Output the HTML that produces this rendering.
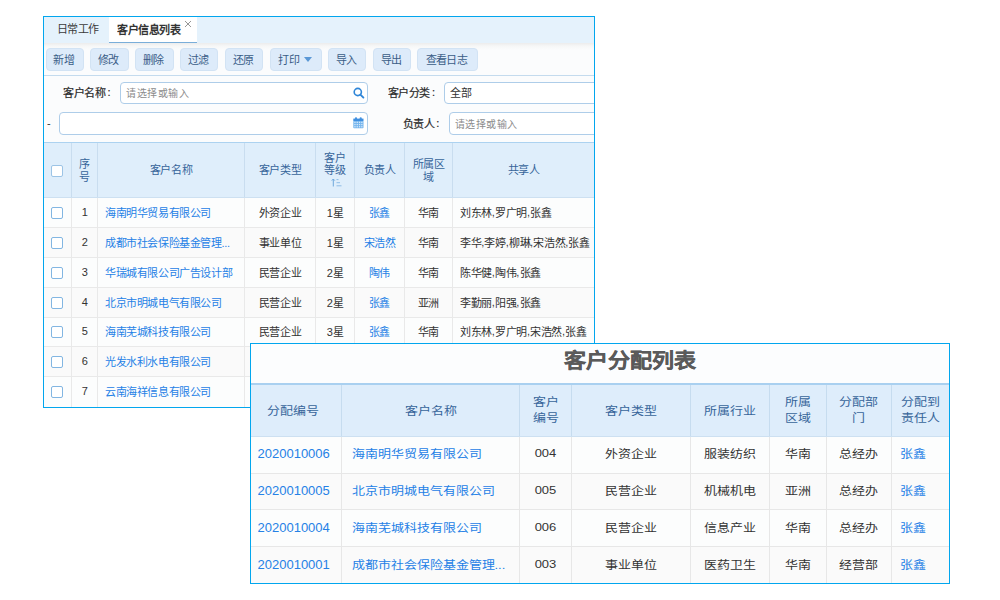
<!DOCTYPE html>
<html lang="zh-CN"><head><meta charset="utf-8">
<style>
*{box-sizing:border-box;margin:0;padding:0}
html,body{width:1000px;height:600px;overflow:hidden;background:#fff;font-family:"Liberation Sans",sans-serif;color:#333}
.a{position:absolute}
.c{display:flex;align-items:center;white-space:nowrap;overflow:hidden}
.cb{position:absolute;width:12px;height:12px;border:1px solid #82b6e2;border-radius:2px;background:#fff}
.btn{position:absolute;height:22.6px;padding-right:2px;border:1px solid #d2e3f4;background:#ddebfa;border-radius:4px;font-size:11px;letter-spacing:-0.6px;display:flex;align-items:center;justify-content:center;color:#3a5d87;white-space:nowrap}
.inp{position:absolute;border:1px solid #aecde9;border-radius:4px;background:#fff}
</style></head><body>

<div class="a" style="left:43px;top:16px;width:552px;height:392px;border:1px solid #02a6ee;background:#fbfcfd;overflow:hidden">
<div class="a" style="left:0px;top:0px;width:550px;height:26px;background:#e5f2fc"></div>
<div class="a c" style="left:12.5px;top:-0.2px;width:50px;height:23px;justify-content:flex-start;font-size:11px;letter-spacing:-0.4px;color:#3a3a3a">日常工作</div>
<div class="a" style="left:65px;top:0px;width:88px;height:26px;background:#fff"></div>
<div class="a" style="left:65px;top:24.6px;width:88px;height:2px;background:#7aaed9"></div>
<div class="a c" style="left:73px;top:0px;width:70px;height:23px;justify-content:flex-start;font-size:11px;letter-spacing:-0.5px;font-weight:bold;color:#333">客户信息列表</div>
<svg class="a" style="left:139.8px;top:2.6px" width="8" height="8" viewBox="0 0 8 8"><path d="M1 1L7 7M7 1L1 7" stroke="#8a8a8a" stroke-width="0.9"/></svg>
<div class="a" style="left:0px;top:26px;width:550px;height:32px;background:linear-gradient(#ececec 0,#f6f7f7 3px,#fbfcfd 7px,#fbfcfd 100%)"></div>
<div class="a" style="left:0px;top:58px;width:550px;height:1.3px;background:#c4dbee"></div>
<div class="btn" style="left:1.5px;top:31.2px;width:38.5px">新增</div>
<div class="btn" style="left:46px;top:31.2px;width:39px">修改</div>
<div class="btn" style="left:91px;top:31.2px;width:39px">删除</div>
<div class="btn" style="left:136px;top:31.2px;width:38px">过滤</div>
<div class="btn" style="left:181px;top:31.2px;width:38px">还原</div>
<div class="btn" style="left:226px;top:31.2px;width:52px">打印<span style="display:inline-block;width:0;height:0;border-left:4px solid transparent;border-right:4px solid transparent;border-top:5px solid #5b98d6;margin-left:4.6px;margin-top:1px"></span></div>
<div class="btn" style="left:284px;top:31.2px;width:38px">导入</div>
<div class="btn" style="left:329px;top:31.2px;width:38px">导出</div>
<div class="btn" style="left:373px;top:31.2px;width:61px">查看日志</div>
<div class="a c" style="left:19px;top:68px;width:60px;height:14px;justify-content:flex-start;font-size:11px;letter-spacing:-0.4px;color:#2a2a2a;-webkit-text-stroke:0.2px #2a2a2a">客户名称<span style='margin-left:2px'>:</span></div>
<div class="inp" style="left:76px;top:65px;width:248px;height:22px"></div>
<div class="a c" style="left:82px;top:68px;width:100px;height:14px;justify-content:flex-start;font-size:10px;letter-spacing:0.55px;color:#8c8c8c">请选择或输入</div>
<svg class="a" style="left:308.5px;top:69.5px" width="12" height="12" viewBox="0 0 12 12"><circle cx="4.8" cy="5" r="3.6" fill="none" stroke="#2f86d8" stroke-width="1.6"/><path d="M7.4 7.6L10.4 10.6" stroke="#2f86d8" stroke-width="1.9" stroke-linecap="round"/></svg>
<div class="a c" style="left:343.5px;top:68px;width:60px;height:14px;justify-content:flex-start;font-size:11px;letter-spacing:-0.4px;color:#2a2a2a;-webkit-text-stroke:0.2px #2a2a2a">客户分类<span style='margin-left:2px'>:</span></div>
<div class="inp" style="left:400px;top:65px;width:200px;height:22px"></div>
<div class="a c" style="left:406px;top:68px;width:50px;height:14px;justify-content:flex-start;font-size:11px;letter-spacing:-0.4px;color:#333">全部</div>
<div class="a c" style="left:3px;top:99px;width:10px;height:14px;justify-content:flex-start;font-size:11px;letter-spacing:-0.4px;color:#333">-</div>
<div class="inp" style="left:15px;top:95px;width:309px;height:23px"></div>
<svg class="a" style="left:309px;top:100.4px" width="11" height="12" viewBox="0 0 11 12"><rect x="1.9" y="0.2" width="2.2" height="2.6" rx="1" fill="#4a96e2"/><rect x="6.6" y="0.2" width="2.2" height="2.6" rx="1" fill="#4a96e2"/><rect x="0.3" y="1.6" width="10.2" height="2.6" fill="#3f8fe0"/><rect x="0.3" y="4" width="10.2" height="7.3" rx="0.8" fill="#74b5ee"/><g fill="#e8f3fd" opacity="0.85"><rect x="1.3" y="4.7" width="1.3" height="1.3"/><rect x="3.6" y="4.7" width="1.3" height="1.3"/><rect x="5.9" y="4.7" width="1.3" height="1.3"/><rect x="8.2" y="4.7" width="1.3" height="1.3"/><rect x="1.3" y="6.9" width="1.3" height="1.3"/><rect x="3.6" y="6.9" width="1.3" height="1.3"/><rect x="5.9" y="6.9" width="1.3" height="1.3"/><rect x="8.2" y="6.9" width="1.3" height="1.3"/><rect x="1.3" y="9.1" width="1.3" height="1.3"/><rect x="3.6" y="9.1" width="1.3" height="1.3"/><rect x="5.9" y="9.1" width="1.3" height="1.3"/><rect x="8.2" y="9.1" width="1.3" height="1.3"/></g></svg>
<div class="a c" style="left:358.5px;top:99px;width:60px;height:14px;justify-content:flex-start;font-size:11px;letter-spacing:-0.4px;color:#2a2a2a;-webkit-text-stroke:0.2px #2a2a2a">负责人<span style='margin-left:2px'>:</span></div>
<div class="inp" style="left:404.5px;top:95px;width:200px;height:23px"></div>
<div class="a c" style="left:410.5px;top:99px;width:100px;height:14px;justify-content:flex-start;font-size:10px;letter-spacing:0.55px;color:#8c8c8c">请选择或输入</div>
<div class="a" style="left:0px;top:125px;width:550px;height:55px;background:#dfeefb"></div>
<div class="a" style="left:0px;top:125px;width:550px;height:1px;background:#acd2f0"></div>
<div class="a" style="left:0px;top:180px;width:550px;height:1px;background:#cde0f1"></div>
<div class="a" style="left:0px;top:181px;width:550px;height:30px;background:#fcfdfd"></div>
<div class="a" style="left:0px;top:211px;width:550px;height:30px;background:#fafafa"></div>
<div class="a" style="left:0px;top:241px;width:550px;height:30px;background:#fcfdfd"></div>
<div class="a" style="left:0px;top:271px;width:550px;height:30px;background:#fafafa"></div>
<div class="a" style="left:0px;top:301px;width:550px;height:29.30000000000001px;background:#fcfdfd"></div>
<div class="a" style="left:0px;top:330.3px;width:550px;height:30.0px;background:#fafafa"></div>
<div class="a" style="left:0px;top:360.3px;width:550px;height:30.69999999999999px;background:#fcfdfd"></div>
<div class="a" style="left:27px;top:126px;width:1px;height:54px;background:#c9ddef"></div>
<div class="a" style="left:27px;top:181px;width:1px;height:210px;background:#e9e9e9"></div>
<div class="a" style="left:53px;top:126px;width:1px;height:54px;background:#c9ddef"></div>
<div class="a" style="left:53px;top:181px;width:1px;height:210px;background:#e9e9e9"></div>
<div class="a" style="left:200px;top:126px;width:1px;height:54px;background:#c9ddef"></div>
<div class="a" style="left:200px;top:181px;width:1px;height:210px;background:#e9e9e9"></div>
<div class="a" style="left:271px;top:126px;width:1px;height:54px;background:#c9ddef"></div>
<div class="a" style="left:271px;top:181px;width:1px;height:210px;background:#e9e9e9"></div>
<div class="a" style="left:310px;top:126px;width:1px;height:54px;background:#c9ddef"></div>
<div class="a" style="left:310px;top:181px;width:1px;height:210px;background:#e9e9e9"></div>
<div class="a" style="left:360px;top:126px;width:1px;height:54px;background:#c9ddef"></div>
<div class="a" style="left:360px;top:181px;width:1px;height:210px;background:#e9e9e9"></div>
<div class="a" style="left:408px;top:126px;width:1px;height:54px;background:#c9ddef"></div>
<div class="a" style="left:408px;top:181px;width:1px;height:210px;background:#e9e9e9"></div>
<div class="a" style="left:0px;top:210px;width:550px;height:1px;background:#e9e9e9"></div>
<div class="a" style="left:0px;top:240px;width:550px;height:1px;background:#e9e9e9"></div>
<div class="a" style="left:0px;top:270px;width:550px;height:1px;background:#e9e9e9"></div>
<div class="a" style="left:0px;top:300px;width:550px;height:1px;background:#e9e9e9"></div>
<div class="a" style="left:0px;top:329.3px;width:550px;height:1px;background:#e9e9e9"></div>
<div class="a" style="left:0px;top:359.3px;width:550px;height:1px;background:#e9e9e9"></div>
<div class="cb" style="left:6.7px;top:147.5px;border-color:#9cc4e6"></div>
<div class="a c" style="left:28px;top:127px;width:25px;height:54px;justify-content:center;font-size:11px;letter-spacing:-0.4px;color:#37659a"><div style="text-align:center;line-height:13.3px">序<br>号</div></div>
<div class="a c" style="left:54px;top:127px;width:146px;height:54px;justify-content:center;font-size:11px;letter-spacing:-0.4px;color:#37659a"><div style="text-align:center;line-height:13.3px">客户名称</div></div>
<div class="a c" style="left:201px;top:127px;width:70px;height:54px;justify-content:center;font-size:11px;letter-spacing:-0.4px;color:#37659a"><div style="text-align:center;line-height:13.3px">客户类型</div></div>
<div class="a c" style="left:272px;top:127px;width:38px;height:54px;justify-content:center;font-size:11px;letter-spacing:-0.4px;color:#37659a"><div style="text-align:center;line-height:13.3px"><div style='line-height:12.2px;margin-top:-14.6px'>客户<br>等级</div></div></div>
<div class="a c" style="left:311px;top:127px;width:49px;height:54px;justify-content:center;font-size:11px;letter-spacing:-0.4px;color:#37659a"><div style="text-align:center;line-height:13.3px">负责人</div></div>
<div class="a c" style="left:361px;top:127px;width:47px;height:54px;justify-content:center;font-size:11px;letter-spacing:-0.4px;color:#37659a"><div style="text-align:center;line-height:13.3px">所属区<br>域</div></div>
<div class="a c" style="left:409px;top:127px;width:141px;height:54px;justify-content:center;font-size:11px;letter-spacing:-0.4px;color:#37659a"><div style="text-align:center;line-height:13.3px">共享人</div></div>
<svg class="a" style="left:287px;top:161px" width="12" height="9" viewBox="0 0 12 9"><path d="M2.3 8.5V1.2M0.8 2.6L2.3 1L3.8 2.6" stroke="#6ea8dc" stroke-width="1" fill="none"/><path d="M5.5 1.6H7.5M5.5 4.7H9M5.5 7.8H10.5" stroke="#8fbde6" stroke-width="1"/></svg>
<div class="cb" style="left:6.7px;top:189.5px"></div>
<div class="a c" style="left:28px;top:180px;width:25px;height:29px;justify-content:center;font-size:11px;letter-spacing:-0.4px;color:#333">1</div>
<div class="a c" style="left:61px;top:180px;width:139px;height:29px;justify-content:flex-start;font-size:11px;letter-spacing:-0.4px;color:#2581e6">海南明华贸易有限公司</div>
<div class="a c" style="left:201px;top:180px;width:70px;height:29px;justify-content:center;font-size:11px;letter-spacing:-0.4px;color:#333">外资企业</div>
<div class="a c" style="left:272px;top:180px;width:38px;height:29px;justify-content:center;font-size:11px;letter-spacing:-0.4px;color:#333">1星</div>
<div class="a c" style="left:311px;top:180px;width:49px;height:29px;justify-content:center;font-size:11px;letter-spacing:-0.4px;color:#2581e6">张鑫</div>
<div class="a c" style="left:361px;top:180px;width:47px;height:29px;justify-content:center;font-size:11px;letter-spacing:-0.4px;color:#333">华南</div>
<div class="a c" style="left:416px;top:180px;width:134px;height:29px;justify-content:flex-start;font-size:11px;letter-spacing:-0.4px;color:#333">刘东林<span style="margin-right:0.6px">,</span>罗广明<span style="margin-right:0.6px">,</span>张鑫</div>
<div class="cb" style="left:6.7px;top:219.5px"></div>
<div class="a c" style="left:28px;top:210px;width:25px;height:29px;justify-content:center;font-size:11px;letter-spacing:-0.4px;color:#333">2</div>
<div class="a c" style="left:61px;top:210px;width:139px;height:29px;justify-content:flex-start;font-size:11px;letter-spacing:-0.4px;color:#2581e6">成都市社会保险基金管理...</div>
<div class="a c" style="left:201px;top:210px;width:70px;height:29px;justify-content:center;font-size:11px;letter-spacing:-0.4px;color:#333">事业单位</div>
<div class="a c" style="left:272px;top:210px;width:38px;height:29px;justify-content:center;font-size:11px;letter-spacing:-0.4px;color:#333">1星</div>
<div class="a c" style="left:311px;top:210px;width:49px;height:29px;justify-content:center;font-size:11px;letter-spacing:-0.4px;color:#2581e6">宋浩然</div>
<div class="a c" style="left:361px;top:210px;width:47px;height:29px;justify-content:center;font-size:11px;letter-spacing:-0.4px;color:#333">华南</div>
<div class="a c" style="left:416px;top:210px;width:134px;height:29px;justify-content:flex-start;font-size:11px;letter-spacing:-0.4px;color:#333">李华<span style="margin-right:0.6px">,</span>李婷<span style="margin-right:0.6px">,</span>柳琳<span style="margin-right:0.6px">,</span>宋浩然<span style="margin-right:0.6px">,</span>张鑫</div>
<div class="cb" style="left:6.7px;top:249.5px"></div>
<div class="a c" style="left:28px;top:240px;width:25px;height:29px;justify-content:center;font-size:11px;letter-spacing:-0.4px;color:#333">3</div>
<div class="a c" style="left:61px;top:240px;width:139px;height:29px;justify-content:flex-start;font-size:11px;letter-spacing:-0.4px;color:#2581e6">华瑞城有限公司广告设计部</div>
<div class="a c" style="left:201px;top:240px;width:70px;height:29px;justify-content:center;font-size:11px;letter-spacing:-0.4px;color:#333">民营企业</div>
<div class="a c" style="left:272px;top:240px;width:38px;height:29px;justify-content:center;font-size:11px;letter-spacing:-0.4px;color:#333">2星</div>
<div class="a c" style="left:311px;top:240px;width:49px;height:29px;justify-content:center;font-size:11px;letter-spacing:-0.4px;color:#2581e6">陶伟</div>
<div class="a c" style="left:361px;top:240px;width:47px;height:29px;justify-content:center;font-size:11px;letter-spacing:-0.4px;color:#333">华南</div>
<div class="a c" style="left:416px;top:240px;width:134px;height:29px;justify-content:flex-start;font-size:11px;letter-spacing:-0.4px;color:#333">陈华健<span style="margin-right:0.6px">,</span>陶伟<span style="margin-right:0.6px">,</span>张鑫</div>
<div class="cb" style="left:6.7px;top:279.5px"></div>
<div class="a c" style="left:28px;top:270px;width:25px;height:29px;justify-content:center;font-size:11px;letter-spacing:-0.4px;color:#333">4</div>
<div class="a c" style="left:61px;top:270px;width:139px;height:29px;justify-content:flex-start;font-size:11px;letter-spacing:-0.4px;color:#2581e6">北京市明城电气有限公司</div>
<div class="a c" style="left:201px;top:270px;width:70px;height:29px;justify-content:center;font-size:11px;letter-spacing:-0.4px;color:#333">民营企业</div>
<div class="a c" style="left:272px;top:270px;width:38px;height:29px;justify-content:center;font-size:11px;letter-spacing:-0.4px;color:#333">2星</div>
<div class="a c" style="left:311px;top:270px;width:49px;height:29px;justify-content:center;font-size:11px;letter-spacing:-0.4px;color:#2581e6">张鑫</div>
<div class="a c" style="left:361px;top:270px;width:47px;height:29px;justify-content:center;font-size:11px;letter-spacing:-0.4px;color:#333">亚洲</div>
<div class="a c" style="left:416px;top:270px;width:134px;height:29px;justify-content:flex-start;font-size:11px;letter-spacing:-0.4px;color:#333">李勤丽<span style="margin-right:0.6px">,</span>阳强<span style="margin-right:0.6px">,</span>张鑫</div>
<div class="cb" style="left:6.7px;top:309.15px"></div>
<div class="a c" style="left:28px;top:300px;width:25px;height:28.30000000000001px;justify-content:center;font-size:11px;letter-spacing:-0.4px;color:#333">5</div>
<div class="a c" style="left:61px;top:300px;width:139px;height:28.30000000000001px;justify-content:flex-start;font-size:11px;letter-spacing:-0.4px;color:#2581e6">海南芜城科技有限公司</div>
<div class="a c" style="left:201px;top:300px;width:70px;height:28.30000000000001px;justify-content:center;font-size:11px;letter-spacing:-0.4px;color:#333">民营企业</div>
<div class="a c" style="left:272px;top:300px;width:38px;height:28.30000000000001px;justify-content:center;font-size:11px;letter-spacing:-0.4px;color:#333">3星</div>
<div class="a c" style="left:311px;top:300px;width:49px;height:28.30000000000001px;justify-content:center;font-size:11px;letter-spacing:-0.4px;color:#2581e6">张鑫</div>
<div class="a c" style="left:361px;top:300px;width:47px;height:28.30000000000001px;justify-content:center;font-size:11px;letter-spacing:-0.4px;color:#333">华南</div>
<div class="a c" style="left:416px;top:300px;width:134px;height:28.30000000000001px;justify-content:flex-start;font-size:11px;letter-spacing:-0.4px;color:#333">刘东林<span style="margin-right:0.6px">,</span>罗广明<span style="margin-right:0.6px">,</span>宋浩然<span style="margin-right:0.6px">,</span>张鑫</div>
<div class="cb" style="left:6.7px;top:338.8px"></div>
<div class="a c" style="left:28px;top:329.3px;width:25px;height:29.0px;justify-content:center;font-size:11px;letter-spacing:-0.4px;color:#333">6</div>
<div class="a c" style="left:61px;top:329.3px;width:139px;height:29.0px;justify-content:flex-start;font-size:11px;letter-spacing:-0.4px;color:#2581e6">光发水利水电有限公司</div>
<div class="cb" style="left:6.7px;top:369.15px"></div>
<div class="a c" style="left:28px;top:359.3px;width:25px;height:29.69999999999999px;justify-content:center;font-size:11px;letter-spacing:-0.4px;color:#333">7</div>
<div class="a c" style="left:61px;top:359.3px;width:139px;height:29.69999999999999px;justify-content:flex-start;font-size:11px;letter-spacing:-0.4px;color:#2581e6">云南海祥信息有限公司</div>
</div>
<div class="a" style="left:250px;top:343px;width:700px;height:241px;border:1px solid #02a6ee;background:#fcfdfe;overflow:hidden">
<div class="a" style="left:313px;top:2.5px;font-size:22px;font-weight:bold;color:#5a5a5a;-webkit-text-stroke:0.3px #5a5a5a;line-height:30px;white-space:nowrap;transform:scaleY(0.92)">客户分配列表</div>
<div class="a" style="left:0px;top:39px;width:698px;height:52.5px;background:#deedfb"></div>
<div class="a" style="left:0px;top:39px;width:698px;height:2px;background:#a9d0f0"></div>
<div class="a" style="left:0px;top:91.5px;width:698px;height:1.2px;background:#cde0f1"></div>
<div class="a" style="left:0px;top:92.5px;width:698px;height:37.0px;background:#fcfdfd"></div>
<div class="a" style="left:0px;top:129.5px;width:698px;height:36.5px;background:#fafafa"></div>
<div class="a" style="left:0px;top:166px;width:698px;height:37px;background:#fcfdfd"></div>
<div class="a" style="left:0px;top:203px;width:698px;height:37px;background:#fafafa"></div>
<div class="a" style="left:90px;top:41px;width:1px;height:50.5px;background:#c6dcef"></div>
<div class="a" style="left:90px;top:92.5px;width:1px;height:147.5px;background:#e7e7e7"></div>
<div class="a" style="left:268px;top:41px;width:1px;height:50.5px;background:#c6dcef"></div>
<div class="a" style="left:268px;top:92.5px;width:1px;height:147.5px;background:#e7e7e7"></div>
<div class="a" style="left:320px;top:41px;width:1px;height:50.5px;background:#c6dcef"></div>
<div class="a" style="left:320px;top:92.5px;width:1px;height:147.5px;background:#e7e7e7"></div>
<div class="a" style="left:439px;top:41px;width:1px;height:50.5px;background:#c6dcef"></div>
<div class="a" style="left:439px;top:92.5px;width:1px;height:147.5px;background:#e7e7e7"></div>
<div class="a" style="left:518px;top:41px;width:1px;height:50.5px;background:#c6dcef"></div>
<div class="a" style="left:518px;top:92.5px;width:1px;height:147.5px;background:#e7e7e7"></div>
<div class="a" style="left:575px;top:41px;width:1px;height:50.5px;background:#c6dcef"></div>
<div class="a" style="left:575px;top:92.5px;width:1px;height:147.5px;background:#e7e7e7"></div>
<div class="a" style="left:639.5px;top:41px;width:1px;height:50.5px;background:#c6dcef"></div>
<div class="a" style="left:639.5px;top:92.5px;width:1px;height:147.5px;background:#e7e7e7"></div>
<div class="a" style="left:0px;top:128.5px;width:698px;height:1px;background:#e7e7e7"></div>
<div class="a" style="left:0px;top:165px;width:698px;height:1px;background:#e7e7e7"></div>
<div class="a" style="left:0px;top:202px;width:698px;height:1px;background:#e7e7e7"></div>
<div class="a c" style="left:-2.5px;top:41.7px;width:89px;height:50.5px;justify-content:center;font-size:13px;color:#37659a"><div style="text-align:center;line-height:18.7px;transform:scaleY(0.87)">分配编号</div></div>
<div class="a c" style="left:91px;top:41.7px;width:177px;height:50.5px;justify-content:center;font-size:13px;color:#37659a"><div style="text-align:center;line-height:18.7px;transform:scaleY(0.87)">客户名称</div></div>
<div class="a c" style="left:269px;top:41.7px;width:51px;height:50.5px;justify-content:center;font-size:13px;color:#37659a"><div style="text-align:center;line-height:18.7px;transform:scaleY(0.87)">客户<br>编号</div></div>
<div class="a c" style="left:321px;top:41.7px;width:118px;height:50.5px;justify-content:center;font-size:13px;color:#37659a"><div style="text-align:center;line-height:18.7px;transform:scaleY(0.87)">客户类型</div></div>
<div class="a c" style="left:440px;top:41.7px;width:78px;height:50.5px;justify-content:center;font-size:13px;color:#37659a"><div style="text-align:center;line-height:18.7px;transform:scaleY(0.87)">所属行业</div></div>
<div class="a c" style="left:519px;top:41.7px;width:56px;height:50.5px;justify-content:center;font-size:13px;color:#37659a"><div style="text-align:center;line-height:18.7px;transform:scaleY(0.87)">所属<br>区域</div></div>
<div class="a c" style="left:576px;top:41.7px;width:63.5px;height:50.5px;justify-content:center;font-size:13px;color:#37659a"><div style="text-align:center;line-height:18.7px;transform:scaleY(0.87)">分配部<br>门</div></div>
<div class="a c" style="left:640.5px;top:41.7px;width:57.5px;height:50.5px;justify-content:center;font-size:13px;color:#37659a"><div style="text-align:center;line-height:18.7px;transform:scaleY(0.87)">分配到<br>责任人</div></div>
<div class="a c" style="left:6.5px;top:91.5px;width:83.5px;height:36.0px;justify-content:flex-start;font-size:13px;color:#2581e6">2020010006</div>
<div class="a c" style="left:100.5px;top:91.5px;width:167.5px;height:36.0px;justify-content:flex-start;font-size:13px;color:#2581e6"><span style="display:inline-block;transform:scaleY(0.87)">海南明华贸易有限公司</span></div>
<div class="a c" style="left:269px;top:91.5px;width:51px;height:36.0px;justify-content:center;font-size:13px;color:#333"><span style="display:inline-block;transform:scaleY(0.87)">004</span></div>
<div class="a c" style="left:321px;top:91.5px;width:118px;height:36.0px;justify-content:center;font-size:13px;color:#333"><span style="display:inline-block;transform:scaleY(0.87)">外资企业</span></div>
<div class="a c" style="left:440px;top:91.5px;width:78px;height:36.0px;justify-content:center;font-size:13px;color:#333"><span style="display:inline-block;transform:scaleY(0.87)">服装纺织</span></div>
<div class="a c" style="left:519px;top:91.5px;width:56px;height:36.0px;justify-content:center;font-size:13px;color:#333"><span style="display:inline-block;transform:scaleY(0.87)">华南</span></div>
<div class="a c" style="left:576px;top:91.5px;width:63.5px;height:36.0px;justify-content:center;font-size:13px;color:#333"><span style="display:inline-block;transform:scaleY(0.87)">总经办</span></div>
<div class="a c" style="left:648.5px;top:91.5px;width:49.5px;height:36.0px;justify-content:flex-start;font-size:13px;color:#2581e6"><span style="display:inline-block;transform:scaleY(0.87)">张鑫</span></div>
<div class="a c" style="left:6.5px;top:128.5px;width:83.5px;height:35.5px;justify-content:flex-start;font-size:13px;color:#2581e6">2020010005</div>
<div class="a c" style="left:100.5px;top:128.5px;width:167.5px;height:35.5px;justify-content:flex-start;font-size:13px;color:#2581e6"><span style="display:inline-block;transform:scaleY(0.87)">北京市明城电气有限公司</span></div>
<div class="a c" style="left:269px;top:128.5px;width:51px;height:35.5px;justify-content:center;font-size:13px;color:#333"><span style="display:inline-block;transform:scaleY(0.87)">005</span></div>
<div class="a c" style="left:321px;top:128.5px;width:118px;height:35.5px;justify-content:center;font-size:13px;color:#333"><span style="display:inline-block;transform:scaleY(0.87)">民营企业</span></div>
<div class="a c" style="left:440px;top:128.5px;width:78px;height:35.5px;justify-content:center;font-size:13px;color:#333"><span style="display:inline-block;transform:scaleY(0.87)">机械机电</span></div>
<div class="a c" style="left:519px;top:128.5px;width:56px;height:35.5px;justify-content:center;font-size:13px;color:#333"><span style="display:inline-block;transform:scaleY(0.87)">亚洲</span></div>
<div class="a c" style="left:576px;top:128.5px;width:63.5px;height:35.5px;justify-content:center;font-size:13px;color:#333"><span style="display:inline-block;transform:scaleY(0.87)">总经办</span></div>
<div class="a c" style="left:648.5px;top:128.5px;width:49.5px;height:35.5px;justify-content:flex-start;font-size:13px;color:#2581e6"><span style="display:inline-block;transform:scaleY(0.87)">张鑫</span></div>
<div class="a c" style="left:6.5px;top:165px;width:83.5px;height:36px;justify-content:flex-start;font-size:13px;color:#2581e6">2020010004</div>
<div class="a c" style="left:100.5px;top:165px;width:167.5px;height:36px;justify-content:flex-start;font-size:13px;color:#2581e6"><span style="display:inline-block;transform:scaleY(0.87)">海南芜城科技有限公司</span></div>
<div class="a c" style="left:269px;top:165px;width:51px;height:36px;justify-content:center;font-size:13px;color:#333"><span style="display:inline-block;transform:scaleY(0.87)">006</span></div>
<div class="a c" style="left:321px;top:165px;width:118px;height:36px;justify-content:center;font-size:13px;color:#333"><span style="display:inline-block;transform:scaleY(0.87)">民营企业</span></div>
<div class="a c" style="left:440px;top:165px;width:78px;height:36px;justify-content:center;font-size:13px;color:#333"><span style="display:inline-block;transform:scaleY(0.87)">信息产业</span></div>
<div class="a c" style="left:519px;top:165px;width:56px;height:36px;justify-content:center;font-size:13px;color:#333"><span style="display:inline-block;transform:scaleY(0.87)">华南</span></div>
<div class="a c" style="left:576px;top:165px;width:63.5px;height:36px;justify-content:center;font-size:13px;color:#333"><span style="display:inline-block;transform:scaleY(0.87)">总经办</span></div>
<div class="a c" style="left:648.5px;top:165px;width:49.5px;height:36px;justify-content:flex-start;font-size:13px;color:#2581e6"><span style="display:inline-block;transform:scaleY(0.87)">张鑫</span></div>
<div class="a c" style="left:6.5px;top:202px;width:83.5px;height:36px;justify-content:flex-start;font-size:13px;color:#2581e6">2020010001</div>
<div class="a c" style="left:100.5px;top:202px;width:167.5px;height:36px;justify-content:flex-start;font-size:13px;color:#2581e6"><span style="display:inline-block;transform:scaleY(0.87)">成都市社会保险基金管理...</span></div>
<div class="a c" style="left:269px;top:202px;width:51px;height:36px;justify-content:center;font-size:13px;color:#333"><span style="display:inline-block;transform:scaleY(0.87)">003</span></div>
<div class="a c" style="left:321px;top:202px;width:118px;height:36px;justify-content:center;font-size:13px;color:#333"><span style="display:inline-block;transform:scaleY(0.87)">事业单位</span></div>
<div class="a c" style="left:440px;top:202px;width:78px;height:36px;justify-content:center;font-size:13px;color:#333"><span style="display:inline-block;transform:scaleY(0.87)">医药卫生</span></div>
<div class="a c" style="left:519px;top:202px;width:56px;height:36px;justify-content:center;font-size:13px;color:#333"><span style="display:inline-block;transform:scaleY(0.87)">华南</span></div>
<div class="a c" style="left:576px;top:202px;width:63.5px;height:36px;justify-content:center;font-size:13px;color:#333"><span style="display:inline-block;transform:scaleY(0.87)">经营部</span></div>
<div class="a c" style="left:648.5px;top:202px;width:49.5px;height:36px;justify-content:flex-start;font-size:13px;color:#2581e6"><span style="display:inline-block;transform:scaleY(0.87)">张鑫</span></div>
</div>
</body></html>
